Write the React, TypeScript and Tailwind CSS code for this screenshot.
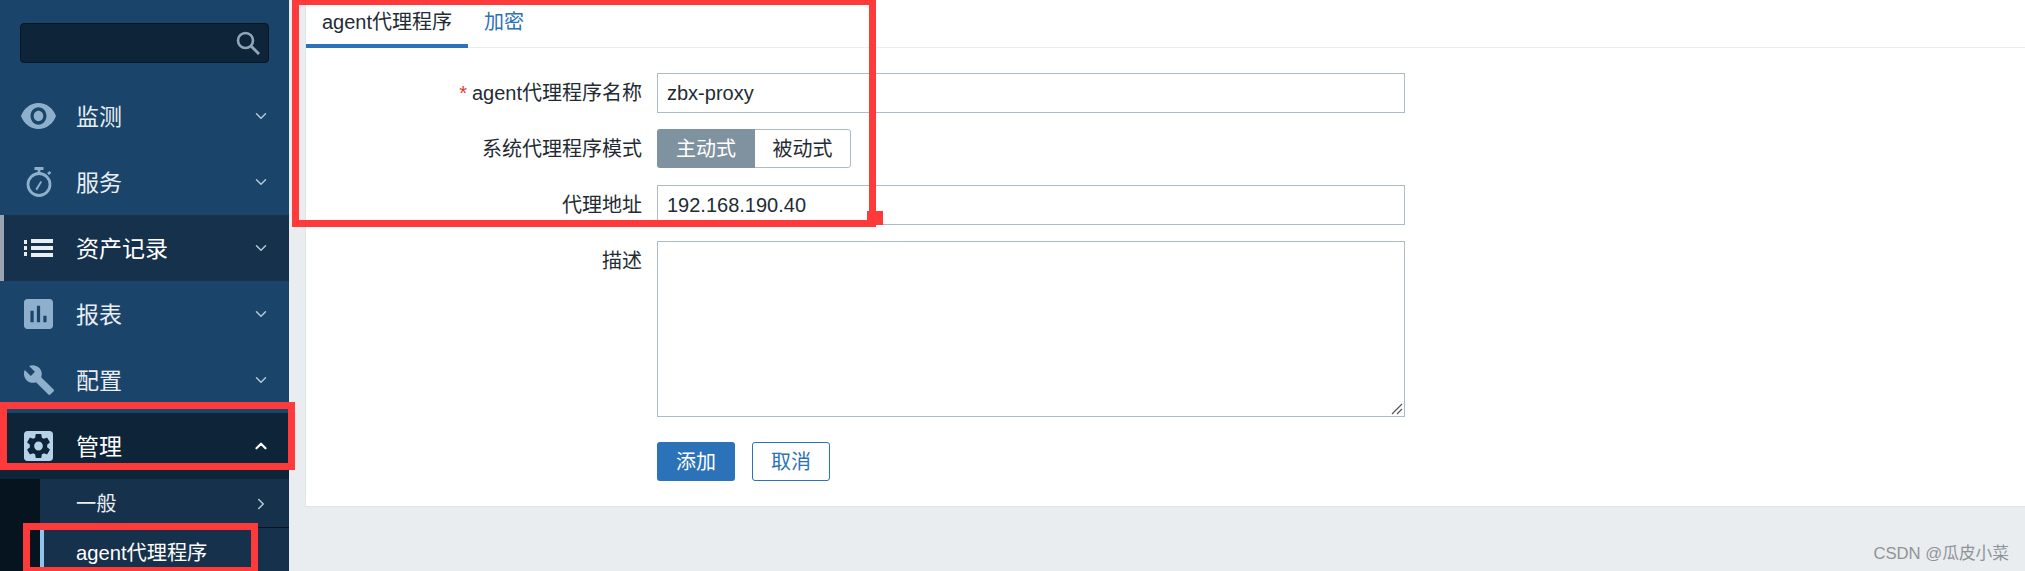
import React from 'react';
import { ChevronDown, ChevronUp, ChevronRight } from 'lucide-react';

const FONT = 'font-["Liberation_Sans","Noto_Sans_CJK_SC",sans-serif]';

const EyeIcon = () => (
  <svg viewBox="1 4.5 22 15" className="w-[35px] h-[26px] -ml-[3px]" fill="#8fb0cc" preserveAspectRatio="none">
    <path d="M12 4.5C7 4.5 2.73 7.61 1 12c1.73 4.39 6 7.5 11 7.5s9.27-3.11 11-7.5c-1.73-4.39-6-7.5-11-7.5zM12 17c-2.76 0-5-2.24-5-5s2.24-5 5-5 5 2.24 5 5-2.24 5-5 5zm0-8c-1.66 0-3 1.34-3 3s1.34 3 3 3 3-1.34 3-3-1.34-3-3-3z" />
  </svg>
);

const TimerIcon = () => (
  <svg viewBox="0 0 26 30" className="w-[26px] h-[30px] ml-[2px]" fill="none" stroke="#8fb0cc" strokeWidth="2.8">
    <circle cx="13" cy="17.5" r="11" />
    <path d="M8.5 1.5h9M13 1.5v5M22 7l2.5-2" />
    <path d="M9.5 22l5-8 1.5 1-5 8.5z" fill="#8fb0cc" stroke="none" />
  </svg>
);

const ListIcon = () => (
  <svg viewBox="0 0 29 18" className="w-[29px] h-[18px]" fill="#e8eef3">
    <rect x="0" y="1" width="3" height="4" />
    <rect x="0" y="7" width="3" height="4" />
    <rect x="0" y="13" width="3" height="4" />
    <rect x="7" y="0" width="22" height="4" />
    <rect x="7" y="7" width="22" height="4" />
    <rect x="7" y="14" width="22" height="4" />
  </svg>
);

const ReportIcon = () => (
  <svg viewBox="3 3 18 18" className="w-[29px] h-[30px]" fill="#8fb0cc" preserveAspectRatio="none">
    <path d="M19 3H5c-1.1 0-2 .9-2 2v14c0 1.1.9 2 2 2h14c1.1 0 2-.9 2-2V5c0-1.1-.9-2-2-2zM9 17H7v-7h2v7zm4 0h-2V7h2v10zm4 0h-2v-4h2v4z" />
  </svg>
);

const WrenchIcon = () => (
  <svg viewBox="1 1 22 22" className="w-[30px] h-[30px]" fill="#8fb0cc">
    <path d="M22.7 19l-9.1-9.1c.9-2.3.4-5-1.5-6.9-2-2-5-2.4-7.4-1.3L9 6 6 9 1.6 4.7C.4 7.1.9 10.1 2.9 12.1c1.9 1.9 4.6 2.4 6.9 1.5l9.1 9.1c.4.4 1 .4 1.4 0l2.3-2.3c.5-.4.5-1.1.1-1.4z" />
  </svg>
);

const GearIcon = () => (
  <svg viewBox="0 0 24 24" className="w-[29px] h-[30px]" preserveAspectRatio="none">
    <rect x="0" y="0" width="24" height="24" rx="3" fill="#b5d2e9" />
    <path
      fill="#0e2438"
      d="M19.14 12.94c.04-.3.06-.61.06-.94 0-.32-.02-.64-.07-.94l2.03-1.58c.18-.14.23-.41.12-.61l-1.92-3.32c-.12-.22-.37-.29-.59-.22l-2.39.96c-.5-.38-1.03-.7-1.62-.94l-.36-2.54c-.04-.24-.24-.41-.48-.41h-3.84c-.24 0-.43.17-.47.41l-.36 2.54c-.59.24-1.13.57-1.62.94l-2.39-.96c-.22-.08-.47 0-.59.22L2.74 8.87c-.12.21-.08.47.12.61l2.03 1.58c-.05.3-.09.63-.09.94s.02.64.07.94l-2.03 1.58c-.18.14-.23.41-.12.61l1.92 3.32c.12.22.37.29.59.22l2.39-.96c.5.38 1.03.7 1.62.94l.36 2.54c.05.24.24.41.48.41h3.84c.24 0 .44-.17.47-.41l.36-2.54c.59-.24 1.13-.56 1.62-.94l2.39.96c.22.08.47 0 .59-.22l1.92-3.32c.12-.22.07-.47-.12-.61l-2.01-1.58zM12 15.6c-1.98 0-3.6-1.62-3.6-3.6s1.62-3.6 3.6-3.6 3.6 1.62 3.6 3.6-1.62 3.6-3.6 3.6z"
    />
  </svg>
);

const SearchIcon = () => (
  <svg viewBox="0 0 24 24" className="w-[24px] h-[24px]" fill="none" stroke="#8fa6b8" strokeWidth="2.6">
    <circle cx="9.5" cy="9.5" r="7.5" />
    <path d="M15 15l8 8" strokeWidth="3" />
  </svg>
);

const MenuItem = ({ icon, label, active, open }: { icon: React.ReactNode; label: string; active?: boolean; open?: boolean }) => {
  let bg = 'bg-[#1a4469]';
  if (active) bg = 'bg-[#15314c] border-l-4 border-[#9aa5b1]';
  if (open) bg = 'bg-[#0e2438]';
  return (
    <div className={`h-[66px] flex items-center ${bg}`}>
      <div className={`${active ? 'w-[72px] pl-[20px]' : 'w-[76px] pl-[24px]'} flex items-center`}>{icon}</div>
      <span className={`flex-1 pt-[2px] text-[23px] ${active || open ? 'text-white' : 'text-[#e8eef3]'}`}>{label}</span>
      {open ? (
        <ChevronUp className="w-[18px] h-[18px] mr-[19px] text-white" strokeWidth={3} />
      ) : (
        <ChevronDown className="w-[18px] h-[18px] mr-[19px] text-[#b5c8d8]" strokeWidth={2} />
      )}
    </div>
  );
};

const Sidebar = () => (
  <aside className="w-[289px] h-[571px] shrink-0 bg-[#1a4469] flex flex-col overflow-hidden">
    <div className="h-[83px] pt-[23px] px-[20px]">
      <div className="h-[40px] w-[249px] bg-[#0e2438] border border-[#081522] rounded-[4px] flex items-center justify-end pr-[8px]">
        <SearchIcon />
      </div>
    </div>
    <MenuItem icon={<EyeIcon />} label="监测" />
    <MenuItem icon={<TimerIcon />} label="服务" />
    <MenuItem icon={<ListIcon />} label="资产记录" active />
    <MenuItem icon={<ReportIcon />} label="报表" />
    <MenuItem icon={<WrenchIcon />} label="配置" />
    <MenuItem icon={<GearIcon />} label="管理" open />
    <div className="flex-1 flex bg-[#06141f]">
      <div className="w-[40px] shrink-0" />
      <div className="flex-1 flex flex-col bg-[#16314b]">
        <div className="h-[49px] flex items-center justify-between pl-[36px] pr-[19px] pt-[2px] border-b border-[#081522] text-[20.2px] text-[#e8eef3]">
          <span>一般</span>
          <ChevronRight className="w-[18px] h-[18px] text-[#b5c8d8]" strokeWidth={2} />
        </div>
        <div className="flex-1 border-l-4 border-[#8fc4ee] pl-[32px] pt-[7px] text-[20.2px] leading-[36px] text-white">agent代理程序</div>
      </div>
    </div>
  </aside>
);

const FormRow = ({ label, required, className, children }: { label: string; required?: boolean; className?: string; children: React.ReactNode }) => (
  <div className={`flex ${className ?? ''}`}>
    <div className="w-[336px] shrink-0 h-[40px] flex items-center justify-end text-[20px] text-[#1f2c33]">
      {required && <span className="text-[#e33734] mr-[5px]">*</span>}
      {label}
    </div>
    <div className="ml-[15px]">{children}</div>
  </div>
);

const TextField = ({ value }: { value: string }) => (
  <div className="w-[748px] h-[40px] border border-[#acbbc7] bg-white flex items-center px-[9px] text-[20px] text-[#1f2c33]">{value}</div>
);

const ProxyForm = () => (
  <main className="flex-1 flex flex-col">
    <div className="h-[507px] bg-white border-l border-b border-[#dfe4e7] ml-[16px]">
      <div className="flex h-[48px] border-b border-[#ebeef0]">
        <div className="w-[162px] h-[48px] border-b-4 border-[#2b72b8] text-center text-[20px] leading-[45px] text-[#1f2c33]">agent代理程序</div>
        <div className="ml-[16px] text-[20px] leading-[45px] text-[#2b72b8]">加密</div>
      </div>
      <div className="pt-[25px] flex flex-col gap-[16px]">
        <FormRow label="agent代理程序名称" required>
          <TextField value="zbx-proxy" />
        </FormRow>
        <FormRow label="系统代理程序模式" className="h-[39px]">
          <div className="flex h-[39px] text-[20px] rounded-[3px] overflow-hidden">
            <div className="w-[98px] flex items-center justify-center bg-[#7f929f] text-white">主动式</div>
            <div className="w-[96px] flex items-center justify-center border border-l-0 border-[#acbbc7] rounded-r-[3px] text-[#1f2c33]">被动式</div>
          </div>
        </FormRow>
        <FormRow label="代理地址" className="mt-[1px]">
          <TextField value="192.168.190.40" />
        </FormRow>
        <FormRow label="描述">
          <div className="relative w-[748px] h-[176px] border border-[#acbbc7] bg-white">
            <svg viewBox="0 0 12 12" className="absolute right-[1px] bottom-[1px] w-[12px] h-[12px]" stroke="#555" strokeWidth="1.2">
              <path d="M1 11L11 1M6 11l5-5" />
            </svg>
          </div>
        </FormRow>
      </div>
      <div className="flex gap-[17px] ml-[351px] mt-[25px]">
        <button className="w-[78px] h-[39px] bg-[#2b72b8] rounded-[3px] text-[20px] text-white">添加</button>
        <button className="w-[78px] h-[39px] border border-[#2b72b8] rounded-[3px] bg-white text-[20px] text-[#2b72b8]">取消</button>
      </div>
    </div>
    <div className="flex-1 flex items-end justify-end pr-[16px] pb-[5px] text-[16.7px] text-[#8f9498]">CSDN @瓜皮小菜</div>
  </main>
);

// red marks drawn over the screenshot
const Annotations = () => (
  <>
    <div className="absolute left-[292px] top-[-2px] w-[584px] h-[229px] border-[7px] border-[#ff3a3a]" />
    <div className="absolute left-[867px] top-[211px] w-[16px] h-[14px] bg-[#ff3a3a]" />
    <div className="absolute left-[0px] top-[402px] w-[295px] h-[68px] border-[7px] border-[#ff3a3a]" />
    <div className="absolute left-[23px] top-[523px] w-[235px] h-[51px] border-[7px] border-[#ff3a3a]" />
  </>
);

export default function App() {
  return (
    <div className={`relative w-[2025px] h-[571px] overflow-hidden flex bg-[#e9edf0] ${FONT}`}>
      <Sidebar />
      <ProxyForm />
      <Annotations />
    </div>
  );
}
